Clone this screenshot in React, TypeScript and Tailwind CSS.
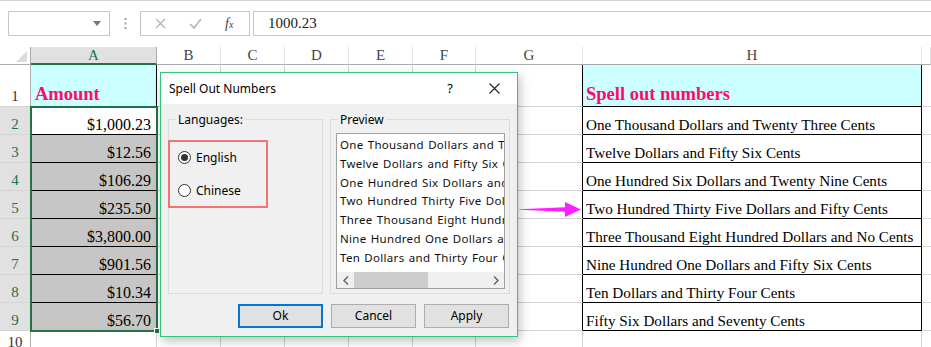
import React from 'react';

const colWidths = [31, 126, 64, 64, 64, 64, 63, 107, 339, 9];
const colLetters = ['', 'A', 'B', 'C', 'D', 'E', 'F', 'G', 'H', ''];

const amounts = ['$1,000.23', '$12.56', '$106.29', '$235.50', '$3,800.00', '$901.56', '$10.34', '$56.70'];
const spelled = [
  'One Thousand Dollars and Twenty Three Cents',
  'Twelve Dollars and Fifty Six Cents',
  'One Hundred Six Dollars and Twenty Nine Cents',
  'Two Hundred Thirty Five Dollars and Fifty Cents',
  'Three Thousand Eight Hundred Dollars and No Cents',
  'Nine Hundred One Dollars and Fifty Six Cents',
  'Ten Dollars and Thirty Four Cents',
  'Fifty Six Dollars and Seventy Cents',
];

const preview = [
  'One Thousand Dollars and Twenty Three Cents',
  'Twelve Dollars and Fifty Six Cents',
  'One Hundred Six Dollars and Twenty Nine Cents',
  'Two Hundred Thirty Five Dollars and Fifty Cents',
  'Three Thousand Eight Hundred Dollars and No Cents',
  'Nine Hundred One Dollars and Fifty Six Cents',
  'Ten Dollars and Thirty Four Cents',
];

const serif = "font-['Liberation_Serif','Times_New_Roman',serif]";
const ui = "font-['Noto_Sans','Open_Sans',sans-serif]";

function FormulaBar() {
  return (
    <div className="h-[47px] border-t border-[#d4d4d4] flex items-start pt-[10px] pl-[8px]">
      {/* Name box */}
      <div className="w-[102px] h-[25px] border border-[#c6c6c6] bg-white flex items-center justify-end pr-[8px]">
        <svg width="8" height="5" viewBox="0 0 8 5">
          <path d="M0 0h8L4 5z" fill="#777" />
        </svg>
      </div>
      <div className="w-[30px] h-[25px] flex items-center justify-center">
        <svg width="3" height="11" viewBox="0 0 3 11">
          <rect x="0.5" y="0" width="2" height="2" fill="#a0a0a0" />
          <rect x="0.5" y="4.5" width="2" height="2" fill="#a0a0a0" />
          <rect x="0.5" y="9" width="2" height="2" fill="#a0a0a0" />
        </svg>
      </div>
      {/* cancel / enter / fx */}
      <div className="w-[110px] h-[25px] border border-[#c6c6c6] bg-white flex items-center pl-[14px]">
        <svg width="11" height="11" viewBox="0 0 11 11">
          <path d="M1 1l9 9M10 1l-9 9" stroke="#b4b4b4" strokeWidth="1.3" />
        </svg>
        <svg className="ml-[23px]" width="13" height="11" viewBox="0 0 13 11">
          <path d="M1 6l4 4 7-9" stroke="#b4b4b4" strokeWidth="1.6" fill="none" />
        </svg>
        <span className={`ml-[23px] ${serif} italic text-[14px] text-[#444] leading-none`}>
          f<span className="text-[10px]">x</span>
        </span>
      </div>
      <div className="ml-[3px] flex-1 h-[25px] border border-[#c6c6c6] border-r-0 bg-white flex items-center pl-[14px]">
        <span className={`${serif} text-[15px] text-[#222]`}>1000.23</span>
      </div>
    </div>
  );
}

function HeaderRow() {
  return (
    <div className="flex h-[18px]">
      {colLetters.map((l, i) => {
        if (i === 0) {
          return (
            <div key={i} className="h-full border-r border-b border-[#ababab] bg-white flex items-end justify-end pr-[3px] pb-[2px]" style={{ width: colWidths[i] }}>
              <svg width="11" height="11" viewBox="0 0 11 11">
                <path d="M11 0v11H0z" fill="#dcdcdc" />
              </svg>
            </div>
          );
        }
        const sel = l === 'A';
        return (
          <div
            key={i}
            className={`h-full flex items-center justify-center ${serif} text-[15px] leading-none ${
              sel
                ? 'bg-[#e1e1e1] text-[#217346] border-b-2 border-b-[#217346] border-r border-r-[#ababab]'
                : 'bg-white text-[#444] border-b border-b-[#ababab] border-r border-r-[#e1e1e1]'
            }`}
            style={{ width: colWidths[i] }}
          >
            {l}
          </div>
        );
      })}
    </div>
  );
}

function DataRow({ n }: { n: number }) {
  const selected = n >= 2 && n <= 9;
  const inData = n >= 1 && n <= 9;
  const h = n === 1 ? 'h-[42px]' : n === 10 ? 'h-[20px]' : 'h-[28px]';
  return (
    <div className={`flex ${h}`}>
      {/* row header */}
      <div
        className={`h-full border-r border-b border-[#d4d4d4] border-r-[#ababab] flex justify-center ${serif} text-[15px] leading-[18px] ${
          n === 10 ? 'items-start pt-[2px]' : 'items-end pb-[1px]'
        } ${selected ? 'bg-[#e1e1e1] text-[#217346]' : 'bg-white text-[#333]'}`}
        style={{ width: colWidths[0] }}
      >
        {n}
      </div>
      {/* A */}
      <div
        className={`h-full flex items-end justify-end border-r border-b ${
          inData ? 'border-black' : 'border-[#d4d4d4]'
        } ${n === 1 ? 'bg-[#ccffff] justify-start pl-[4px]' : n === 2 ? 'bg-white pr-[5px]' : selected ? 'bg-[#c6c6c6] pr-[5px]' : 'bg-white'}`}
        style={{ width: colWidths[1] }}
      >
        {n === 1 && <span className={`${serif} font-bold text-[18.5px] leading-[22px] text-[#ff0a6c] pb-[1px]`}>Amount</span>}
        {selected && <span className={`${serif} text-[16px] leading-[19px] text-black whitespace-nowrap`}>{amounts[n - 2]}</span>}
      </div>
      {/* B-G */}
      {[2, 3, 4, 5, 6, 7].map((c) => (
        <div
          key={c}
          className={`h-full border-b border-[#d4d4d4] border-r ${c === 7 && inData ? 'border-r-black' : ''}`}
          style={{ width: colWidths[c] }}
        />
      ))}
      {/* H */}
      <div
        className={`h-full flex items-end pl-[3px] border-r border-b ${inData ? 'border-black' : 'border-[#d4d4d4]'} ${
          n === 1 ? 'bg-[#ccffff]' : 'bg-white'
        }`}
        style={{ width: colWidths[8] }}
      >
        {n === 1 && <span className={`${serif} font-bold text-[18.5px] leading-[22px] text-[#ff0a6c] pb-[1px]`}>Spell out numbers</span>}
        {selected && <span className={`${serif} text-[15.2px] leading-[19px] text-black whitespace-nowrap`}>{spelled[n - 2]}</span>}
      </div>
      <div className="h-full flex-1 border-b border-[#d4d4d4] bg-white" />
    </div>
  );
}

function Radio({ checked, label }: { checked?: boolean; label: string }) {
  return (
    <div className="flex items-center gap-[5px]">
      <div className="w-[13px] h-[13px] rounded-full border border-[#333] bg-white flex items-center justify-center">
        {checked && <div className="w-[7px] h-[7px] rounded-full bg-[#333]" />}
      </div>
      <span className="text-[12px] text-black leading-none">{label}</span>
    </div>
  );
}

function Dialog() {
  return (
    <div className={`absolute left-[160px] top-[72px] w-[358px] h-[265px] border border-[#2fc57a] bg-[#f0f0f0] shadow-[2px_4px_10px_rgba(0,0,0,0.25)] ${ui}`}>
      {/* title bar */}
      <div className="h-[31px] bg-white flex items-center pl-[8px] pr-[17px]">
        <span className="text-[12px] text-black">Spell Out Numbers</span>
        <span className="ml-auto text-[13px] text-black">?</span>
        <svg className="ml-[36px]" width="11" height="11" viewBox="0 0 11 11">
          <path d="M0.5 0.5l10 10M10.5 0.5l-10 10" stroke="#222" strokeWidth="1.1" />
        </svg>
      </div>
      {/* body */}
      <div className="flex gap-[7px] pl-[7px] pt-[7px]">
        <fieldset className="w-[155px] h-[183px] border border-[#dcdcdc]">
          <legend className="ml-[7px] px-[2px] text-[12px] leading-[17px] text-black">Languages:</legend>
          <div className="-ml-[1px] mt-[12px] w-[100px] h-[68px] border-2 border-[#f47272] flex flex-col justify-center gap-[20px] pl-[8px]">
            <Radio checked label="English" />
            <Radio label="Chinese" />
          </div>
        </fieldset>
        <fieldset className="w-[180px] h-[183px] border border-[#dcdcdc]">
          <legend className="ml-[7px] px-[2px] text-[12px] leading-[17px] text-black">Preview</legend>
          <div className="ml-[5px] mt-[5px] w-[169px] h-[156px] border border-[#a0a0a0] bg-white flex flex-col">
            <div className="flex-1 overflow-hidden pt-[2px] pl-[3px]">
              {preview.map((p) => (
                <div key={p} className="text-[11.5px] leading-[18.8px] text-[#111] whitespace-nowrap tracking-[0.3px] [word-spacing:1px]">
                  {p}
                </div>
              ))}
            </div>
            <div className="h-[16px] bg-[#f0f0f0] flex items-center">
              <div className="w-[17px] flex justify-center">
                <svg width="6" height="9" viewBox="0 0 6 9">
                  <path d="M5 0.5L1 4.5l4 4" stroke="#606060" strokeWidth="1.4" fill="none" />
                </svg>
              </div>
              <div className="w-[74px] h-[16px] bg-[#cdcdcd]" />
              <div className="ml-auto w-[17px] flex justify-center">
                <svg width="6" height="9" viewBox="0 0 6 9">
                  <path d="M1 0.5l4 4-4 4" stroke="#606060" strokeWidth="1.4" fill="none" />
                </svg>
              </div>
            </div>
          </div>
        </fieldset>
      </div>
      {/* buttons */}
      <div className="flex justify-end gap-[8px] pr-[8px] mt-[10px]">
        <button className="w-[85px] h-[24px] border-2 border-[#0078d7] bg-[#e1e1e1] text-[12px] text-black">Ok</button>
        <button className="w-[85px] h-[24px] border border-[#adadad] bg-[#e1e1e1] text-[12px] text-black">Cancel</button>
        <button className="w-[85px] h-[24px] border border-[#adadad] bg-[#e1e1e1] text-[12px] text-black">Apply</button>
      </div>
    </div>
  );
}

export default function App() {
  return (
    <div className="relative w-[931px] h-[347px] overflow-hidden bg-white">
      <FormulaBar />
      <div className="relative">
        <HeaderRow />
        {[1, 2, 3, 4, 5, 6, 7, 8, 9, 10].map((n) => (
          <DataRow key={n} n={n} />
        ))}
        {/* selection outline A2:A9 */}
        <div className="absolute left-[30px] top-[59px] w-[128px] h-[226px] border-2 border-[#217346] pointer-events-none">
          <div className="absolute -right-[4px] -bottom-[4px] w-[6px] h-[6px] bg-[#217346] border border-white" />
        </div>
      </div>
      <Dialog />
      {/* arrow */}
      <svg className="absolute left-[519px] top-[201px]" width="63" height="17" viewBox="0 0 63 17">
        <path d="M0 8.2L46 6.3V1L62 8.5 46 16v-5.3L0 8.8z" fill="#ff1eff" />
      </svg>
    </div>
  );
}
